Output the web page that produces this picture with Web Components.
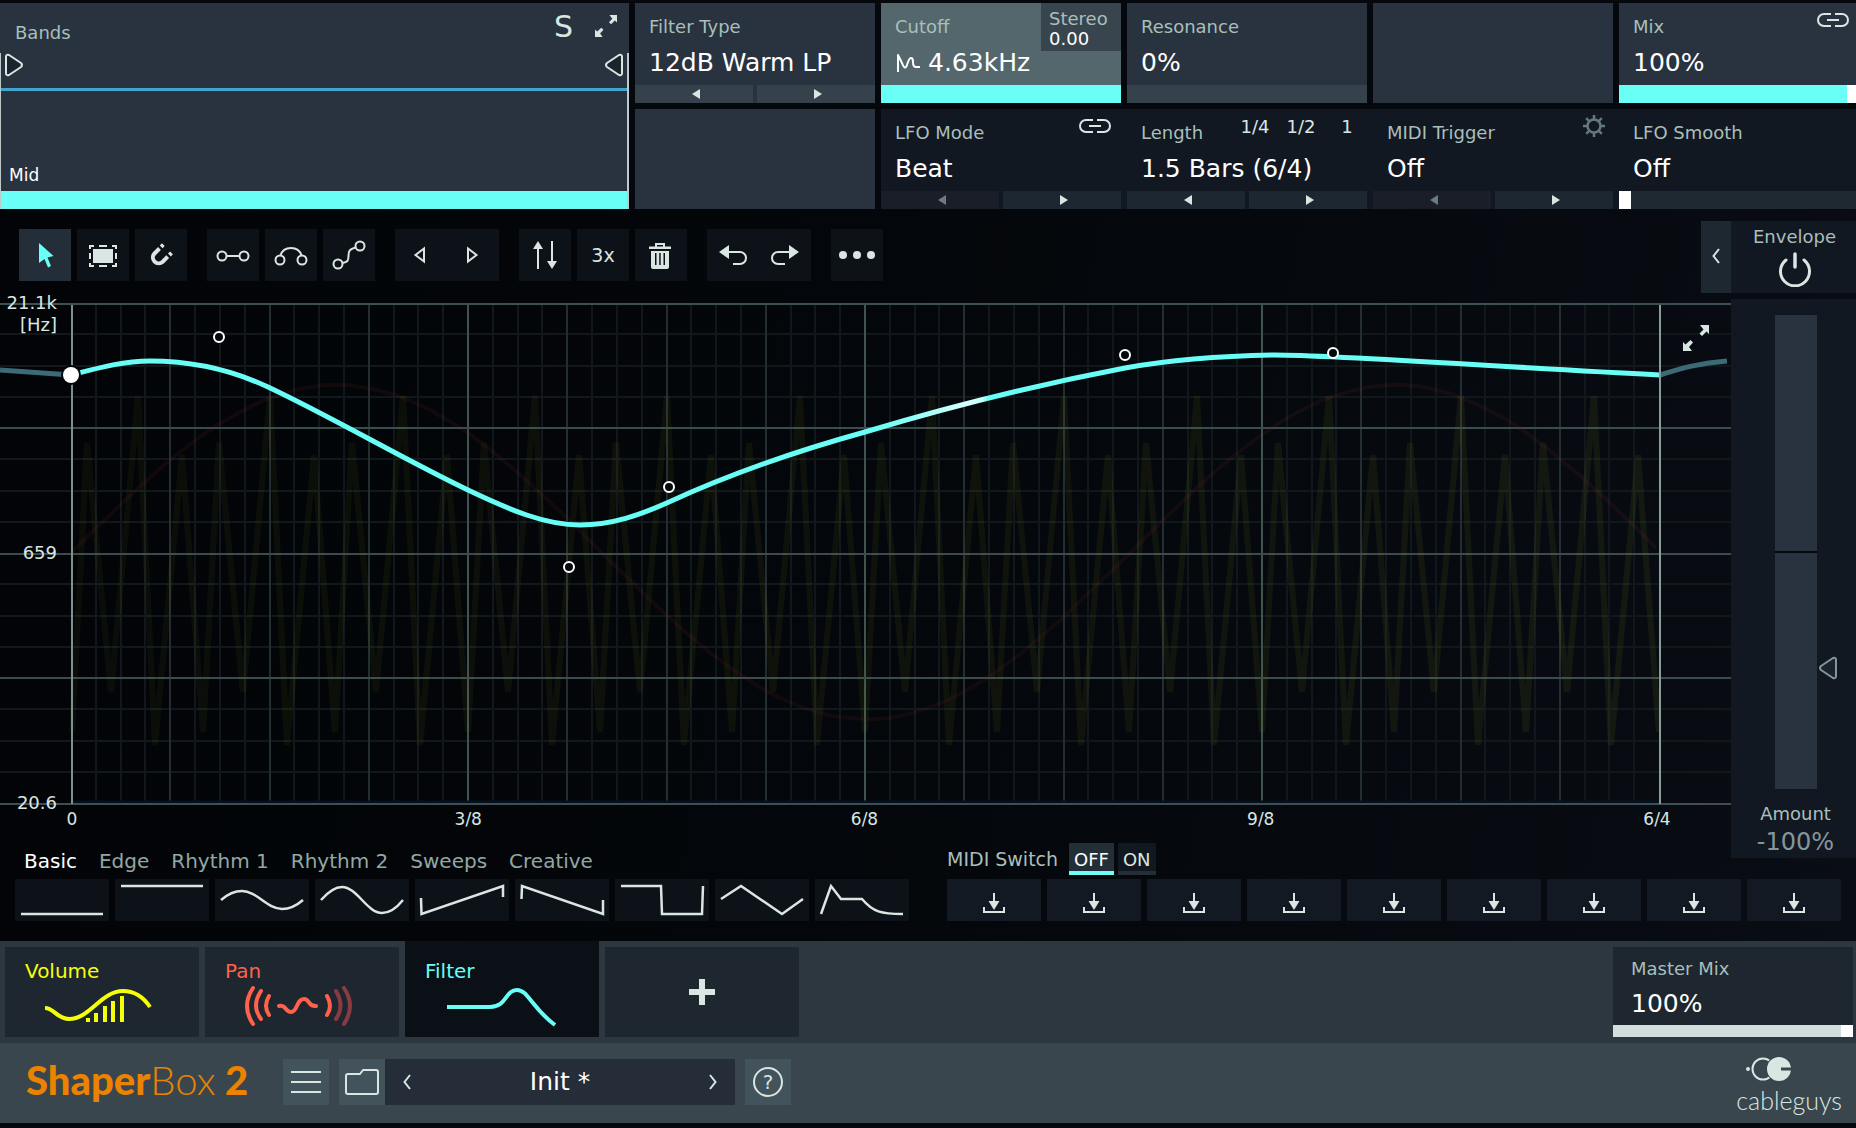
<!DOCTYPE html>
<html lang="en">
<head>
<meta charset="utf-8">
<title>ShaperBox 2</title>
<style>
  html { background: #05080c; }
  body {
    margin: 0;
    font-family: "DejaVu Sans", Verdana, sans-serif;
    font-size: 18px;
    line-height: 20px;
    color: #fff;
    --panel: #28333f;
    --strip: #35424c;
    --label: #a9bfba;
    --icon: #d9e6e2;
    --cyan: #69fff6;
    --deep: #121822;
  }
</style>
</head>
<body>
<sb-app></sb-app>
<script>
const RESET = `
  *, *::before { box-sizing: border-box; }
  button { appearance: none; border: 0; margin: 0; padding: 0; background: none; color: inherit; font: inherit; cursor: pointer; }
  svg { display: block; }
  [hidden] { display: none; }
`;

function define(name, css, html, setup) {
  const template = document.createElement('template');
  template.innerHTML = `<style>${RESET}${css}</style>`;
  customElements.define(name, class extends HTMLElement {
    connectedCallback() {
      if (this.shadowRoot) return;
      const root = this.attachShadow({ mode: 'open' });
      root.append(template.content.cloneNode(true));
      const body = document.createElement('template');
      body.innerHTML = typeof html === 'function' ? html(this) : html;
      root.append(body.content);
      if (setup) setup(this, root);
    }
  });
}

/* ---------- icons ---------- */
const ICONS = {
  cursor: ['0 0 52 52', '<path fill="#69fff6" d="M20 14 34.500 27 28.500 28.500 32 37 29 38.500 25.500 30 20 34Z"/>'],
  select: ['0 0 52 52', '<path fill="currentColor" d="M16 20h20v14H16z"/><path fill="none" stroke="currentColor" stroke-width="2" d="M13 20v-3h4M22 17h8M35 17h4v3M39 24v6M39 34v3h-4M30 37h-8M17 37h-4v-3M13 30v-6"/>'],
  magnet: ['0 0 52 52', '<path fill="none" stroke="currentColor" stroke-width="4" d="M24.500 19.500 19.500 24.500A5.800 5.800 0 0 0 27.700 32.700L32.700 27.700M26.200 17.800 28.300 15.700M34.400 26 36.500 23.900"/>'],
  line: ['0 0 52 52', '<g fill="none" stroke="currentColor" stroke-width="2"><circle cx="15" cy="27" r="4.500"/><circle cx="37" cy="27" r="4.500"/><path d="M19.500 27h13"/></g>'],
  arc: ['0 0 52 52', '<g fill="none" stroke="currentColor" stroke-width="2"><circle cx="15" cy="31" r="4.500"/><circle cx="37" cy="31" r="4.500"/><path d="M15.500 26.500C17 21.500 21 19 26 19s9 2.500 10.500 7.500"/></g>'],
  curve: ['0 0 52 52', '<g fill="none" stroke="currentColor" stroke-width="2"><circle cx="15" cy="35" r="4.500"/><circle cx="37" cy="17" r="4.500"/><path d="M19.500 34c5-1 6-2 6-7s1-7 7-8.500"/></g>'],
  prev: ['0 0 52 52', '<path fill="none" stroke="currentColor" stroke-width="2" d="M29 19.500v13L20.500 26z"/>'],
  next: ['0 0 52 52', '<path fill="none" stroke="currentColor" stroke-width="2" d="M21 19.500v13L29.500 26z"/>'],
  swap: ['0 0 52 52', '<path fill="none" stroke="currentColor" stroke-width="2" d="M19 40V17M33 12v23"/><path fill="currentColor" d="M14 20h10l-5-8zM28 32h10l-5 8z"/>'],
  trash: ['0 0 52 52', '<path fill="none" stroke="currentColor" stroke-width="2" d="M14 19h22M21 18v-3h8v3M14 18.500h22"/><path fill="currentColor" fill-rule="evenodd" d="M16 22h18v16q0 2-2 2H18q-2 0-2-2zM20 24v12h1.500V24zM24.200 24v12h1.500V24zM28.500 24v12H30V24z"/>'],
  undo: ['0 0 52 52', '<path fill="currentColor" d="M12 23l10-7v14z"/><path fill="none" stroke="currentColor" stroke-width="2" d="M21 23h12a6 6 0 0 1 0 12h-7"/>'],
  redo: ['0 0 52 52', '<path fill="currentColor" d="M40 23l-10-7v14z"/><path fill="none" stroke="currentColor" stroke-width="2" d="M31 23H19a6 6 0 0 0 0 12h7"/>'],
  more: ['0 0 52 52', '<g fill="currentColor"><circle cx="12" cy="26" r="4"/><circle cx="26" cy="26" r="4"/><circle cx="40" cy="26" r="4"/></g>'],
  link: ['0 0 32 14', '<path fill="none" stroke="currentColor" stroke-width="2" d="M14 1H7a6 6 0 0 0 0 12h7M18 1h7a6 6 0 0 1 0 12h-7M10 7h12"/>'],
  gear: ['0 0 22 22', '<g fill="none" stroke="currentColor"><circle cx="11" cy="11" r="6.500" stroke-width="2.500"/><path stroke-width="2.500" d="M11 0v4M11 18v4M0 11h4M18 11h4M3.200 3.200l3 3M15.800 15.800l3 3M3.200 18.800l3-3M15.800 6.200l3-3"/></g>'],
  expand: ['0 0 26 26', '<g fill="currentColor"><path d="M17 0h9v9l-2.500-2.500-4.500 4.500-2.500-2.500 4-4zM9 26H0v-9l2.500 2.500L7.500 15 10 17.500l-4 4.500z"/></g>'],
  power: ['0 0 34 36', '<g fill="none" stroke="currentColor" stroke-linecap="round"><path stroke-width="3" d="M8 9a14.500 14.500 0 1 0 18 0"/><path stroke-width="3.500" d="M17 3v13"/></g>'],
  chevL: ['0 0 8 16', '<path fill="none" stroke="currentColor" stroke-width="2" d="M7 1 1.500 8 7 15"/>'],
  chevR: ['0 0 8 16', '<path fill="none" stroke="currentColor" stroke-width="2" d="M1 1 6.500 8 1 15"/>'],
  handleR: ['0 0 20 24', '<path fill="#1b242d" stroke="currentColor" stroke-width="2" stroke-linejoin="round" d="M2 4q0-3 3-2l12 8q2 2 0 4L5 22q-3 1-3-2z"/>'],
  handleL: ['0 0 20 24', '<path fill="#1b242d" stroke="currentColor" stroke-width="2" stroke-linejoin="round" d="M18 4q0-3-3-2L3 10q-2 2 0 4l12 8q3 1 3-2z"/>'],
  store: ['0 0 94 42', '<path fill="none" stroke="currentColor" stroke-width="2" d="M47 14v12M37 28v5h20v-5"/><path fill="currentColor" d="M41.500 22h11L47 31z"/>'],
  menu: ['0 0 46 46', '<path stroke="currentColor" stroke-width="2" d="M8 13h30M8 23h30M8 33h30"/>'],
  folder: ['0 0 46 46', '<path fill="none" stroke="currentColor" stroke-width="2" stroke-linejoin="round" d="M7 17q0-2 2-2h12l3-4h13q2 0 2 2v20q0 2-2 2H9q-2 0-2-2z"/>'],
  wiggle: ['0 0 26 20', '<path fill="none" stroke="currentColor" stroke-width="2" stroke-linejoin="round" d="M2 19V2l4 8q3 8 5 2 2-7 4-7t2 4q0 5 3 5h4"/>'],
};
const icon = (n, w, h) => {
  const [vb, body] = ICONS[n];
  const [, , bw, bh] = vb.split(' ');
  return `<svg viewBox="${vb}" width="${w || bw}" height="${h || bh}" aria-hidden="true">${body}</svg>`;
};

/* ---------- small controls ---------- */
define('sb-icon', `:host { display: inline-block; color: var(--icon); }`,
  el => icon(el.getAttribute('name'), el.getAttribute('w'), el.getAttribute('h')));

define('sb-stepper', `
  :host { display: flex; gap: 4px; height: 18px; }
  button { flex: 1; display: grid; place-items: center; padding-left: 4px; background: var(--step, var(--strip)); color: var(--icon); }
  button:disabled { background: #191e28; color: #6b7c80; }
`, el => `
  <button aria-label="Previous" ${el.hasAttribute('first') ? 'disabled' : ''}><svg width="8" height="10"><path fill="currentColor" d="M8 0v10L0 5z"/></svg></button>
  <button aria-label="Next"><svg width="8" height="10"><path fill="currentColor" d="M0 0v10l8-5z"/></svg></button>`);

define('sb-fader', `
  :host { display: block; height: var(--fader-height, 18px); }
  input {
    appearance: none; display: block; width: 100%; height: 100%; margin: 0; border-radius: 0;
    background: linear-gradient(90deg, var(--fill, var(--cyan)) var(--at), var(--track, var(--strip)) var(--at));
  }
  input::-webkit-slider-thumb {
    appearance: none; width: var(--thumb, 12px); height: var(--fader-height, 18px);
    background: var(--thumb-color, #fff); border: 0; border-radius: 0;
  }
`, el => `<input type="range" min="0" max="100" value="${el.getAttribute('value')}" aria-label="${el.getAttribute('label')}" style="--at:${el.getAttribute('value')}%">`,
(el, root) => {
  const input = root.querySelector('input');
  input.addEventListener('input', () => input.style.setProperty('--at', input.value + '%'));
});

define('sb-param', `
  :host { display: flex; flex-direction: column; min-height: 100px; background: var(--panel); }
  .head { display: flex; justify-content: space-between; align-items: flex-start; height: var(--head, 45px); padding-left: var(--inset, 14px); }
  .label { padding-top: var(--label-top, 14px); color: var(--label); white-space: nowrap; }
  .value { display: flex; align-items: center; gap: 6px; padding-left: var(--inset, 14px); font-size: 25px; line-height: 30px; white-space: nowrap; }
  ::slotted([slot=strip]) { margin-top: auto; }
`, el => `
  <div class="head"><span class="label">${el.getAttribute('label') || ''}</span><slot name="tools"></slot></div>
  <div class="value"><slot name="icon"></slot>${el.getAttribute('value') || ''}</div>
  <slot name="strip"></slot>`);

define('sb-stereo', `
  :host { display: block; width: 80px; height: 48px; padding: 6px 0 0 8px; background: #38454f; }
  span { display: block; line-height: 20px; }
  .l { color: var(--label); }
`, `<span class="l">Stereo</span><span>0.00</span>`);

define('sb-lengths', `
  :host { display: flex; gap: 16px; padding: 8px 5px 0 0; color: var(--icon); }
  button { width: 30px; line-height: 20px; }
`, `<button>1/4</button><button>1/2</button><button>1</button>`);

/* ---------- bands ---------- */
define('sb-bands', `
  :host { display: flex; flex-direction: column; background: var(--panel); }
  header { display: flex; align-items: flex-start; gap: 22px; height: 50px; padding: 0 12px 0 15px; }
  header span { color: var(--label); margin-right: auto; padding-top: 20px; }
  .solo { font-size: 30px; line-height: 47px; color: var(--icon); }
  .zoom { padding-top: 12px; color: var(--icon); }
  .range {
    flex: 1; display: flex; flex-direction: column;
    border-left: 1px solid #bccbc9; border-right: 2px solid #bccbc9;
  }
  .handles { display: flex; justify-content: space-between; height: 38px; padding: 0 3px; border-bottom: 3px solid #42a6cf; }
  .band { flex: 1; display: flex; flex-direction: column; justify-content: flex-end; border-bottom: 18px solid var(--cyan); }
  .band span { padding: 0 0 6px 8px; font-size: 17px; }
`, `
  <header><span>Bands</span><button class="solo" aria-label="Solo">S</button><button class="zoom" aria-label="Expand bands">${icon('expand', 22, 22)}</button></header>
  <div class="range">
    <div class="handles"><sb-icon name="handleR"></sb-icon><sb-icon name="handleL"></sb-icon></div>
    <div class="band"><span>Mid</span></div>
  </div>`);

/* ---------- parameter area ---------- */
define('sb-params', `
  :host {
    display: grid; gap: 6px; padding-top: 3px;
    grid-template-columns: 629fr repeat(4, 240fr) 237fr;
  }
  sb-bands { grid-row: span 2; }
  .lfo {
    grid-column: 3 / -1; display: grid; grid-template-columns: subgrid;
    background: var(--deep); --panel: transparent; --step: #1d2731;
  }
  .hot { --panel: #54676c; }
  .link { padding: 10px 7px 0 0; }
  .lfo .link { padding-right: 10px; }
  .gear { padding: 6px 8px 0 0; color: #65787e; }
  .bare { --thumb-color: transparent; }
  .wiggle { color: #fff; margin-left: 1px; }
  .mix { --thumb: 9px; }
  .smooth { --track: #1f2932; }
`, `
  <sb-bands></sb-bands>
  <sb-param label="Filter Type" value="12dB Warm LP"><sb-stepper slot="strip"></sb-stepper></sb-param>
  <sb-param class="hot" label="Cutoff" value="4.63kHz">
    <sb-stereo slot="tools"></sb-stereo>
    <sb-icon class="wiggle" slot="icon" name="wiggle"></sb-icon>
    <sb-fader class="bare" slot="strip" value="100" label="Cutoff"></sb-fader>
  </sb-param>
  <sb-param label="Resonance" value="0%"><sb-fader class="bare" slot="strip" value="0" label="Resonance"></sb-fader></sb-param>
  <sb-param></sb-param>
  <sb-param label="Mix" value="100%">
    <sb-icon class="link" slot="tools" name="link"></sb-icon>
    <sb-fader class="mix" slot="strip" value="100" label="Mix"></sb-fader>
  </sb-param>
  <sb-param></sb-param>
  <div class="lfo">
    <sb-param label="LFO Mode" value="Beat">
      <sb-icon class="link" slot="tools" name="link"></sb-icon>
      <sb-stepper slot="strip" first></sb-stepper>
    </sb-param>
    <sb-param label="Length" value="1.5 Bars (6/4)">
      <sb-lengths slot="tools"></sb-lengths>
      <sb-stepper slot="strip"></sb-stepper>
    </sb-param>
    <sb-param label="MIDI Trigger" value="Off">
      <sb-icon class="gear" slot="tools" name="gear"></sb-icon>
      <sb-stepper slot="strip" first></sb-stepper>
    </sb-param>
    <sb-param label="LFO Smooth" value="Off"><sb-fader class="smooth" slot="strip" value="0" label="LFO Smooth"></sb-fader></sb-param>
  </div>`);

/* ---------- toolbar ---------- */
const tool = (n, label, cls = '') => `<button class="${cls}" aria-label="${label}">${icon(n)}</button>`;
define('sb-toolbar', `
  :host { display: flex; justify-content: space-between; align-items: flex-start; }
  nav { display: flex; gap: 20px; padding: 20px 0 12px 19px; }
  .group { display: flex; gap: 6px; }
  .joined { gap: 0; }
  nav button { width: 52px; height: 52px; background: #0d1219; color: var(--icon); font-size: 19px; }
  nav .on { background: #242e38; }
  .fold { display: grid; place-items: center; width: 30px; height: 72px; margin-top: 12px; padding-bottom: 2px; background: #1e2831; color: var(--icon); }
`, `
  <nav aria-label="Editor tools">
    <div class="group">${tool('cursor', 'Pointer', 'on')}${tool('select', 'Select')}${tool('magnet', 'Snap')}</div>
    <div class="group">${tool('line', 'Line')}${tool('arc', 'Arc')}${tool('curve', 'S-curve')}</div>
    <div class="group joined">${tool('prev', 'Shift left')}${tool('next', 'Shift right')}</div>
    <div class="group">${tool('swap', 'Flip')}<button>3x</button>${tool('trash', 'Delete')}</div>
    <div class="group joined">${tool('undo', 'Undo')}${tool('redo', 'Redo')}</div>
    <div class="group">${tool('more', 'More')}</div>
  </nav>
  <button class="fold" aria-label="Collapse envelope">${icon('chevL')}</button>`);

/* ---------- wave editor ---------- */
function drawGraph() {
  const L = 72, R = 1660, T = 304, B = 804, W = 1731;
  let grid = '';
  for (let i = 1; i < 64; i++) {
    const x = Math.floor(L + (R - L) * i / 64 - 0.5);
    const c = i % 16 === 0 ? '#42524f' : i % 4 === 0 ? '#232e30' : '#11181b';
    grid += `<path stroke="${c}" d="M${x} ${T}V${B}"/>`;
  }
  let rows = '';
  for (let i = 1; i < 16; i++) {
    const y = i === 8 ? (T + B) / 2 : Math.floor(T + (B - T) * i / 16 - 0.5);
    const path = `<path stroke="${i % 4 ? '#11181b' : '#3c4b4e'}" d="M0 ${y}H${W}"/>`;
    if (i % 4) grid = path + grid; else rows += path;
  }
  const period = (R - L) / 12;
  const shape = [[15, 443], [39, 692], [66, 396], [83, 745], [110, 455], [131, 732]];
  const pts = [[L, 732]];
  for (let k = 0; k < 12; k++) for (const [x, y] of shape) pts.push([Math.round(L + k * period + x), y]);
  const vol = 'M' + pts.map(p => p.join(' ')).join('L');
  let pan = '';
  for (let x = L; x <= R; x += 12) pan += `${pan ? 'L' : 'M'}${x} ${Math.round(552 - 167 * Math.sin((x - L) / (R - L) * 3 * Math.PI))}`;
  const nodes = [[219, 337], [569, 567], [669, 487], [1125, 355], [1333, 353]]
    .map(([x, y]) => `<circle cx="${x}" cy="${y}" r="5"/>`).join('');
  const times = ['0', '3/8', '6/8', '9/8', '6/4']
    .map((t, i) => `<text x="${L + (R - 3 - L) * i / 4}" y="825">${t}</text>`).join('');
  return `
  <svg viewBox="0 293 1731 538" role="img" aria-label="Cutoff LFO shape">
    <defs>
      <linearGradient id="glow" gradientUnits="userSpaceOnUse" x1="880" y1="0" x2="1000" y2="0">
        <stop offset="0" stop-color="#69fff6"/><stop offset=".7" stop-color="#d4fffd"/><stop offset=".85" stop-color="#c8fffc"/><stop offset=".9" stop-color="#69fff6"/>
      </linearGradient>
      <linearGradient id="yellow" gradientUnits="userSpaceOnUse" x1="72" y1="0" x2="1660" y2="0">
        <stop offset="0" stop-color="#7a8a10" stop-opacity=".07"/><stop offset="1" stop-color="#7a8a10" stop-opacity=".11"/>
      </linearGradient>
    </defs>
    <g fill="none" stroke-width="2">${grid}${rows}
      <path stroke="#04101f" stroke-width="3" d="M72 802H1660"/>
      <path stroke="#3f4f51" d="M0 304H1731M0 804H1731"/></g>
    <path fill="none" stroke="url(#yellow)" stroke-width="6" stroke-linejoin="bevel" d="${vol}"/>
    <path fill="none" stroke="#8c2a2a" stroke-opacity=".11" stroke-width="4" d="${pan}"/>
    <path fill="none" stroke="#7f908f" stroke-width="2" d="M72 305V804"/>
    <path fill="none" stroke="#3c6a77" stroke-width="5" d="M0 370 71 375M1660 375C1682 368 1700 363 1727 361"/>
    <path fill="none" stroke="url(#glow)" stroke-width="5" d="M71 375C98 368 123 361 150 361C194 361 232 370 268 387C330 416 405 460 468 490C510 510 545 525 580 525C612 525 640 515 669 502C730 474 800 450 865 432C935 411 1020 388 1125 368C1170 360 1215 356 1275 355C1335 355 1500 367 1660 375"/>
    <path fill="none" stroke="#8a9b9a" stroke-width="2" d="M1660 305V804"/>
    <circle cx="71" cy="375" r="10" fill="#020508"/><circle cx="71" cy="375" r="8" fill="#fff"/>
    <g fill="#04070b" stroke="#fff" stroke-width="2">${nodes}</g>
    <g fill="#d9e6e2" font-size="18" text-anchor="end">
      <text x="57" y="309">21.1k</text><text x="57" y="331">[Hz]</text><text x="57" y="559">659</text><text x="57" y="809">20.6</text></g>
    <g fill="#d9e6e2" font-size="17" text-anchor="middle">${times}</g>
  </svg>`;
}
define('sb-graph', `
  :host { display: block; position: relative; }
  svg { width: 100%; height: auto; }
  button { position: absolute; top: 32px; right: 22px; color: var(--icon); }
  button svg { width: 26px; height: 26px; }
`, () => drawGraph() + `<button aria-label="Expand editor">${icon('expand')}</button>`);

/* ---------- envelope ---------- */
define('sb-envelope', `
  :host { display: flex; flex-direction: column; gap: 6px; padding-top: 12px; color: var(--label); text-align: center; }
  .top, .body { background: var(--deep); display: flex; flex-direction: column; align-items: center; }
  .top { height: 72px; padding: 6px 0 0 2px; gap: 4px; }
  .top button { color: var(--icon); }
  .body { padding: 16px 0 1px 4px; }
  .slot { position: relative; width: 42px; height: 474px; margin-bottom: 15px; }
  input {
    appearance: none; writing-mode: vertical-lr; direction: rtl; display: block; width: 42px; height: 474px; margin: 0;
    background: linear-gradient(#05080c, #05080c) 0 236px / 100% 2px no-repeat var(--panel);
  }
  input::-webkit-slider-thumb { appearance: none; width: 42px; height: 20px; background: transparent; }
  .slot svg { position: absolute; left: 43px; top: 341px; color: #84969a; }
  output { font-size: 24px; line-height: 30px; color: #84969a; }
  label { padding-bottom: 3px; }
`, `
  <div class="top"><span>Envelope</span><button aria-label="Envelope power">${icon('power')}</button></div>
  <div class="body">
    <div class="slot"><input id="amount" type="range" min="-100" max="100" value="-50">${icon('handleL')}</div>
    <label for="amount">Amount</label><output for="amount">-100%</output>
  </div>`);

/* ---------- presets ---------- */
const SHAPES = {
  'Flat low': 'M6 35H88', 'Flat high': 'M6 7H88',
  'Soft sine': 'M6 21C14 14 20 12 27 12C42 12 52 30 67 30C74 30 80 28 88 21',
  'Sine': 'M6 21C14 12 20 8 27 8C42 8 52 34 67 34C74 34 80 31 88 21',
  'Ramp up': 'M6 19 6.500 35 88 7V18', 'Ramp down': 'M6.500 20 7 7 88 35V21',
  'Square': 'M6 7H46L47 35H87L88 7', 'Triangle': 'M6 20 26 7 67 35 88 20',
  'Decay': 'M6 35 16 7 26 20H47C58 33 66 35 88 35',
};
define('sb-presets', `
  :host { display: grid; grid-template-columns: 1fr 1fr; column-gap: 38px; padding: 12px 15px 20px; }
  .row { display: grid; grid-template-columns: repeat(9, 1fr); gap: 6px; margin-top: 4px; }
  .row button { height: 42px; background: #0d1219; color: var(--icon); overflow: hidden; }
  .slots button { background: #121922; }
  .row svg { margin: 0 auto; }
  .tabs { display: flex; align-items: flex-end; gap: 22px; height: 32px; padding: 0 0 3px 9px; font-size: 20px; line-height: 22px; color: #93a8a4; }
  .tabs .on { color: #fff; }
  .switch { display: flex; gap: 4px; height: 32px; }
  .switch span { min-width: 118px; padding-top: 6px; font-size: 19px; color: var(--label); }
  .switch button { padding: 5px 5px 0; color: var(--icon); background: #12181f; border-bottom: 4px solid #242e37; }
  .switch .on { color: #fff; background: #242e37; border-color: var(--cyan); }
`, `
  <section>
    <div class="tabs"><button class="on">Basic</button><button>Edge</button><button>Rhythm 1</button><button>Rhythm 2</button><button>Sweeps</button><button>Creative</button></div>
    <div class="row">${Object.entries(SHAPES).map(([n, d]) => `<button aria-label="${n}"><svg width="94" height="42" viewBox="0 0 94 42"><path fill="none" stroke="currentColor" stroke-width="2.500" d="${d}"/></svg></button>`).join('')}</div>
  </section>
  <section>
    <div class="switch"><span>MIDI Switch</span><button class="on" aria-pressed="true">OFF</button><button aria-pressed="false">ON</button></div>
    <div class="row slots">${Array.from({ length: 9 }, (_, i) => `<button aria-label="Store slot ${i + 1}">${icon('store')}</button>`).join('')}</div>
  </section>`);

define('sb-editor', `
  :host {
    display: grid; grid-template-columns: minmax(0, 1fr) 125px;
    background: linear-gradient(100deg, #020407, #04070b 55%, #090d14);
  }
  sb-toolbar, sb-graph { grid-column: 1; }
  sb-envelope { grid-column: 2; grid-row: 1 / 4; align-self: start; }
  sb-presets { grid-column: 1 / -1; grid-row: 3; }
`, `<sb-toolbar></sb-toolbar><sb-graph></sb-graph><sb-presets></sb-presets><sb-envelope></sb-envelope>`);

/* ---------- rack ---------- */
define('sb-shaper', `
  :host { display: block; width: 194px; margin-top: 6px; background: #1e2730; }
  :host([active]) { margin-top: 0; padding-top: 6px; background: #0b0f16; }
  button { display: flex; flex-direction: column; width: 100%; height: 90px; text-align: left; font-size: 20px; line-height: 22px; }
  span { display: block; padding: 13px 0 0 20px; }
`, el => `<button>${el.getAttribute('name') ? `<span>${el.getAttribute('name')}</span>` : ''}<slot></slot></button>`);

define('sb-rack', `
  :host { display: flex; gap: 6px; padding: 0 3px 6px 5px; background: #2c373f; }
  .vol { color: #f6ff0a; } .pan { color: #ff614b; } .filter { color: var(--cyan); }
  .add { color: var(--icon); }
  .master {
    width: 240px; margin: 6px 0 0 auto; min-height: 90px;
    --panel: #1e2730; --fader-height: 12px; --fill: #d1dedb;
    --inset: 18px; --label-top: 12px; --head: 42px;
  }
`, `
  <sb-shaper class="vol" name="Volume"><svg width="194" height="55" viewBox="5 982 194 55">
    <path fill="none" stroke="currentColor" stroke-width="4" d="M45 1008C54 1008 57 1019 69 1019C90 1019 101 991 123 991C135 991 144 998 150 1007"/>
    <path stroke="currentColor" stroke-width="4" d="M88 1022v-4M96 1022v-9M105 1022v-16M113 1022v-21M122 1022v-26"/></svg></sb-shaper>
  <sb-shaper class="pan" name="Pan"><svg width="194" height="55" viewBox="205 982 194 55">
    <g fill="none" stroke="currentColor" stroke-width="4" stroke-linecap="round">
      <path d="M253 988Q241 1006 253 1024M261 991Q251 1006 261 1019M269 996Q263 1006 269 1015M279 1006C286 1004 285 1012 291 1012C298 1012 296 999 304 999C310 999 308 1007 316 1006M327 996Q333 1006 327 1015"/>
      <path stroke="#8a3b42" d="M336 991Q345 1006 336 1019M344 988Q356 1006 344 1024"/></g></svg></sb-shaper>
  <sb-shaper class="filter" name="Filter" active><svg width="194" height="55" viewBox="405 982 194 55">
    <path fill="none" stroke="currentColor" stroke-width="4" d="M447 1007H490C507 1007 505 990 517 990C528 990 531 1007 555 1025"/></svg></sb-shaper>
  <sb-shaper class="add"><svg width="194" height="90" viewBox="605 947 194 90" role="img" aria-label="Add shaper"><path stroke="currentColor" stroke-width="6" d="M702 979v26M689 992h26"/></svg></sb-shaper>
  <sb-param class="master" label="Master Mix" value="100%"><sb-fader slot="strip" value="100" label="Master Mix"></sb-fader></sb-param>`);

/* ---------- footer ---------- */
define('sb-footer', `
  :host { display: flex; align-items: flex-start; height: 80px; padding: 16px 14px 0 26px; background: #39464d; color: var(--icon); }
  .logo { width: 257px; color: #eb8200; font-family: Lato, sans-serif; font-size: 40px; line-height: 42px; font-weight: 900; white-space: nowrap; }
  .logo i { font-style: normal; font-weight: 300; }
  button { color: var(--icon); }
  .sq { width: 46px; height: 46px; background: #43535b; }
  .menu { margin-right: 10px; }
  .preset { display: flex; justify-content: space-between; align-items: center; width: 350px; height: 46px; padding: 0 18px; margin-right: 10px; background: #242d38; font-size: 25px; line-height: 30px; color: #fff; }
  .help span { display: grid; place-items: center; width: 30px; height: 30px; margin: 0 auto; border: 2px solid; border-radius: 50%; font-size: 20px; }
  .maker { margin: -3px 0 0 auto; font-family: Lato, sans-serif; font-weight: 300; font-size: 25px; line-height: 30px; }
  .maker svg { margin: 0 0 3px 4px; }
  .maker span { display: block; }
`, `
  <div class="logo">Shaper<i>Box</i> 2</div>
  <button class="sq menu" aria-label="Menu">${icon('menu')}</button>
  <button class="sq" aria-label="Open preset">${icon('folder')}</button>
  <div class="preset"><button aria-label="Previous preset">${icon('chevL')}</button><span>Init *</span><button aria-label="Next preset">${icon('chevR')}</button></div>
  <button class="sq help" aria-label="Help"><span>?</span></button>
  <div class="maker">
    <svg width="58" height="26" viewBox="1741 1056 58 26"><circle cx="1749" cy="1069" r="2" fill="currentColor"/><circle cx="1764" cy="1069" r="10.500" fill="none" stroke="currentColor" stroke-width="2"/><circle cx="1780" cy="1069" r="13" fill="#39464d"/><circle cx="1780" cy="1069" r="12" fill="currentColor"/><path stroke="#39464d" stroke-width="3" d="M1782 1069h12"/></svg>
    <span>cableguys</span>
  </div>`);

define('sb-app', `:host { display: block; }`,
  `<sb-params></sb-params><sb-editor></sb-editor><sb-rack></sb-rack><sb-footer></sb-footer>`);
</script>
</body>
</html>
